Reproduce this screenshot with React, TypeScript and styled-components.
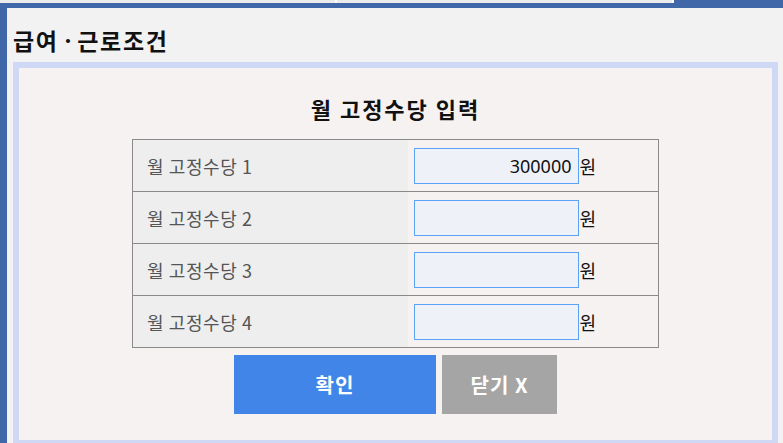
import React from "react";
import styled, { createGlobalStyle } from "styled-components";

const Global = createGlobalStyle`
  html, body { margin: 0; padding: 0; }
  body {
    background: #f2f2f2;
    font-family: "Noto Sans CJK KR", "Noto Sans", sans-serif;
    width: 783px;
    height: 443px;
    overflow: hidden;
  }
`;

const Tabs = styled.div`
  display: flex;
  height: 3px;
`;

const Tab = styled.div<{ $w: number }>`
  width: ${(p) => p.$w}px;
  background: #ececec;
  border-right: 2px solid #ffffff;
`;

const TabFill = styled.div`
  flex: 1;
  background: #4068a9;
`;

const Frame = styled.div`
  border-top: 5px solid #4068a9;
  border-left: 7px solid #4068a9;
  height: 443px;
  box-sizing: border-box;
  padding: 0 5px 0 6px;
  display: flex;
  flex-direction: column;
`;

const Title = styled.h1`
  margin: 0;
  height: 54px;
  flex-shrink: 0;
  display: flex;
  align-items: flex-end;
  font-size: 23px;
  letter-spacing: 1.7px;
  font-weight: 700;
  color: #111;
  line-height: 1;
  box-sizing: border-box;
  padding-bottom: 10px;
  white-space: pre;
`;

const Dot = styled.span`
  font-family: "Noto Sans", sans-serif;
  letter-spacing: 0;
`;

const Panel = styled.div`
  border: 6px solid #cfd9f6;
  background: #f7f2f2;
  flex: 1;
  display: flex;
  flex-direction: column;
  align-items: center;
  padding-top: 30px;
`;

const Heading = styled.h2`
  margin: 0 0 21px;
  font-size: 22px;
  letter-spacing: 2px;
  font-weight: 700;
  color: #111;
  line-height: 20px;
  height: 20px;
`;

const Table = styled.table`
  border-collapse: collapse;
  border: 1px solid #8a8a8a;
  width: 527px;
`;

const Row = styled.tr`
  height: 52px;
  border-bottom: 1px solid #8a8a8a;
`;

const LabelCell = styled.td`
  width: 275px;
  background: #eeeeee;
  padding: 0 0 0 14px;
  font-size: 18px;
  letter-spacing: 0.6px;
  color: #555555;
  box-sizing: border-box;
`;

const ValueCell = styled.td`
  padding: 0 0 0 6px;
  color: #111;
`;

const ValueWrap = styled.div`
  display: flex;
  align-items: center;
`;

const Input = styled.input`
  width: 165px;
  height: 36px;
  box-sizing: border-box;
  border: 1px solid #59a2f5;
  background: #eef2f8;
  text-align: right;
  font-size: 18px;
  font-family: "Noto Sans", "Noto Sans CJK KR", sans-serif;
  color: #111;
  padding: 0 6px 0 0;
  margin: 0 1px 0 0;
  outline: none;
`;

const Unit = styled.span`
  font-size: 18px;
  color: #111;
`;

const Buttons = styled.div`
  display: flex;
  gap: 6px;
  margin-top: 7px;
`;

const Button = styled.button<{ $w: number; $bg: string }>`
  width: ${(p) => p.$w}px;
  height: 59px;
  border: none;
  background: ${(p) => p.$bg};
  color: #ffffff;
  font-size: 20px;
  letter-spacing: 1px;
  font-weight: 700;
  font-family: "Noto Sans CJK KR", "Noto Sans", sans-serif;
  padding: 0;
`;

const rows = ["300000", "", "", ""];

export default function App() {
  return (
    <>
      <Global />
      <Tabs>
        <Tab $w={335} />
        <Tab $w={335} />
        <TabFill />
      </Tabs>
      <Frame>
        <Title>
          급여<Dot> · </Dot>근로조건
        </Title>
        <Panel>
          <Heading>월 고정수당 입력</Heading>
          <Table>
            <tbody>
              {rows.map((v, i) => (
                <Row key={i}>
                  <LabelCell>월 고정수당 {i + 1}</LabelCell>
                  <ValueCell>
                    <ValueWrap>
                      <Input defaultValue={v} />
                      <Unit>원</Unit>
                    </ValueWrap>
                  </ValueCell>
                </Row>
              ))}
            </tbody>
          </Table>
          <Buttons>
            <Button $w={202} $bg="#4285e9">확인</Button>
            <Button $w={115} $bg="#a5a5a5">닫기 X</Button>
          </Buttons>
        </Panel>
      </Frame>
    </>
  );
}
